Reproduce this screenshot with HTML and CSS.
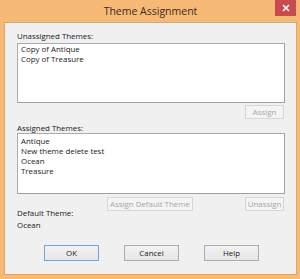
FILE: index.html
```html
<!DOCTYPE html>
<html lang="en">
<head>
  <meta charset="UTF-8" />
  <title>Theme Assignment</title>
  <link rel="stylesheet" href="styles.css">
</head>
<body>
  <div class="window">
    <div class="titlebar">
      <span class="title">Theme Assignment</span>
      <span class="close">
        <svg width="8" height="8" viewBox="0 0 8 8">
          <path d="M1 1 L7 7 M7 1 L1 7" stroke="#fff" stroke-width="1.6" />
        </svg>
      </span>
    </div>

    <div class="client">
      <div class="label">Unassigned Themes:</div>
      <div class="listbox list-unassigned">
        <div class="item">Copy of Antique</div>
        <div class="item">Copy of Treasure</div>
      </div>
      <div class="row row-assign">
        <button class="btn btn-small" disabled>Assign</button>
      </div>

      <div class="label label-assigned">Assigned Themes:</div>
      <div class="listbox list-assigned">
        <div class="item">Antique</div>
        <div class="item">New theme delete test</div>
        <div class="item">Ocean</div>
        <div class="item">Treasure</div>
      </div>
      <div class="row row-actions">
        <button class="btn btn-default" disabled>Assign Default Theme</button>
        <button class="btn btn-small" disabled>Unassign</button>
      </div>

      <div class="label label-default">Default Theme:</div>
      <div class="value">Ocean</div>

      <div class="footer">
        <button class="btn btn-main btn-ok">OK</button>
        <button class="btn btn-main">Cancel</button>
        <button class="btn btn-main">Help</button>
      </div>
    </div>
  </div>
</body>
</html>
```

FILE: styles.css
```css
html, body {
  margin: 0;
  padding: 0;
}

body {
  font-family: 'Open Sans', 'Segoe UI', sans-serif;
  font-size: 7.9px;
  color: #1a1a1a;
}

.window {
  width: 300px;
  height: 279px;
  box-sizing: border-box;
  background: #f6b976;
  padding: 0 3px 4px 4px;
  display: flex;
  flex-direction: column;
}

.titlebar {
  position: relative;
  height: 22px;
  flex-shrink: 0;
  text-align: center;
}

.title {
  display: block;
  padding-top: 4px;
  font-size: 10.5px;
  line-height: 14px;
  color: #3b2a1c;
}

.close {
  position: absolute;
  top: 0;
  right: 1px;
  width: 21px;
  height: 16px;
  background: #c94a4e;
  display: flex;
  align-items: center;
  justify-content: center;
}

.client {
  flex: 1;
  background: #f0f0f0;
  border: 1px solid #e0a566;
  padding: 8px 11px 0 12px;
  display: flex;
  flex-direction: column;
}

.label,
.value,
.item {
  line-height: 10px;
  height: 10px;
  white-space: nowrap;
}

.listbox {
  box-sizing: border-box;
  background: #fff;
  border: 1px solid #a9abb0;
  border-right-color: #9ea0a6;
  border-bottom-color: #9ea0a6;
  padding: 0 3px;
}

.list-unassigned {
  margin-top: 2px;
  height: 60px;
}

.list-assigned {
  height: 61px;
  padding-top: 2px;
}

.row {
  display: flex;
  justify-content: flex-end;
}

.row-assign {
  margin-top: 2px;
}

.row-actions {
  margin-top: 3px;
  gap: 52px;
  padding-right: 1px;
}

.row-assign {
  padding-right: 1px;
}

.label-assigned {
  margin-top: 4px;
}

.label-default {
  margin-top: -3px;
}

.value {
  margin-top: 2px;
}

.btn {
  font-family: inherit;
  font-size: 7.9px;
  line-height: 10px;
  margin: 0;
  padding: 0;
  box-sizing: border-box;
  height: 14px;
  border: 1px solid #adadad;
  background: linear-gradient(#f2f2f2, #e6e6e6);
  color: #1a1a1a;
}

.btn:disabled {
  border-color: #d6d6d6;
  background: #f4f4f4;
  color: #a6a6a6;
}

.btn-small {
  width: 39px;
}

.btn-default {
  width: 86px;
}

.footer {
  margin-top: 15px;
  display: flex;
  justify-content: center;
  gap: 25px;
  padding-left: 1px;
}

.btn-main {
  width: 55px;
  height: 16px;
}

.btn-ok {
  border-color: #6fa6de;
}
```
